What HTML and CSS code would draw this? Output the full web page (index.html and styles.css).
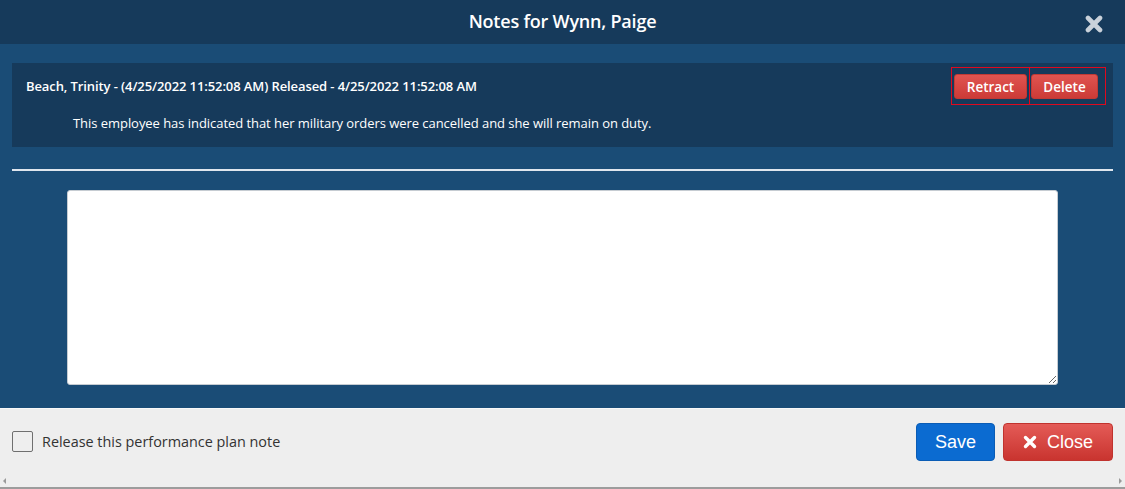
FILE: index.html
```html
<!DOCTYPE html>
<html>
<head>
<meta charset="utf-8">
<link rel="stylesheet" href="styles.css">
</head>
<body>
<div class="dialog">
  <div class="dlg-header">
    <h1 class="dlg-title">Notes for Wynn, Paige</h1>
    <span class="dlg-x">
      <svg width="18" height="18" viewBox="0 0 18 18"><path d="M3 3 L15 15 M15 3 L3 15" stroke="#c9d1da" stroke-width="4.6" stroke-linecap="round"/></svg>
    </span>
  </div>
  <div class="dlg-body">
    <div class="note-card">
      <div class="note-head">
        <div class="note-meta">Beach, Trinity - (4/25/2022 11:52:08 AM) Released - 4/25/2022 11:52:08 AM</div>
        <div class="note-actions">
          <span class="hl hl-left"><button class="btn-sm">Retract</button></span>
          <span class="hl hl-right"><button class="btn-sm">Delete</button></span>
        </div>
      </div>
      <div class="note-text">This employee has indicated that her military orders were cancelled and she will remain on duty.</div>
    </div>
    <hr class="sep">
    <textarea class="note-input"></textarea>
  </div>
  <div class="dlg-footer">
    <label class="chk-label"><span class="chk"></span>Release this performance plan note</label>
    <div class="footer-btns">
      <button class="btn btn-save">Save</button>
      <button class="btn btn-close"><svg width="14" height="14" viewBox="0 0 14 14"><path d="M2.5 2.5 L11.5 11.5 M11.5 2.5 L2.5 11.5" stroke="#fff" stroke-width="3.4" stroke-linecap="round"/></svg>Close</button>
    </div>
    <span class="scroll-l"></span>
    <span class="scroll-r"></span>
  </div>
</div>
</body>
</html>
```
FILE: styles.css
```css
html, body {
  margin: 0;
  padding: 0;
  background: #ffffff;
}
.dialog {
  width: 1125px;
  height: 489px;
  display: flex;
  flex-direction: column;
  font-family: "Open Sans", "DejaVu Sans", sans-serif;
  overflow: hidden;
}
.dlg-header {
  height: 44px;
  flex: none;
  background: #163a5b;
  display: flex;
  align-items: center;
  justify-content: center;
  position: relative;
}
.dlg-title {
  margin: 0 0 2px 0;
  color: #ffffff;
  font-size: 18px;
  font-weight: 600;
  letter-spacing: -0.2px;
}
.dlg-x {
  position: absolute;
  right: 22px;
  top: 15px;
  width: 18px;
  height: 18px;
}
.dlg-body {
  background: #1a4c76;
  height: 364px;
  flex: none;
  padding: 19px 12px 0 12px;
  box-sizing: border-box;
  display: flex;
  flex-direction: column;
}
.note-card {
  background: #163a5b;
  height: 84px;
  box-sizing: border-box;
  padding: 4px 7px 0 14px;
}
.note-head {
  display: flex;
  align-items: center;
  justify-content: space-between;
  height: 38px;
}
.note-meta {
  color: #ffffff;
  font-size: 13px;
  font-weight: 600;
  letter-spacing: -0.1px;
}
.note-actions {
  display: flex;
  height: 38px;
}
.hl {
  display: flex;
  align-items: center;
  border: 1px solid #e0091e;
  box-sizing: border-box;
  height: 38px;
}
.hl-left {
  padding: 0 1px 0 2px;
  width: 79px;
}
.hl-right {
  border-left: none;
  padding: 0 6px 0 1px;
  width: 76px;
}
.btn-sm {
  height: 25px;
  border: 1px solid #c13a35;
  border-radius: 3px;
  background: linear-gradient(#e05450, #cc3b37);
  color: #ffffff;
  font-family: "Open Sans", "DejaVu Sans", sans-serif;
  font-size: 13.5px;
  font-weight: 600;
  padding: 0;
  width: 73px;
  margin-top: 1px;
}
.hl-right .btn-sm {
  width: 67px;
}
.note-text {
  color: #ffffff;
  font-size: 13px;
  line-height: 18px;
  margin-top: 9px;
  padding-left: 47px;
  letter-spacing: -0.05px;
}
.sep {
  margin: 22px 0 0 0;
  border: none;
  height: 2px;
  background: #dfe6ee;
}
.note-input {
  margin: 19px auto 0 auto;
  width: 991px;
  height: 195px;
  box-sizing: border-box;
  border: 1px solid #c6ccd2;
  border-radius: 3px;
  background: #ffffff;
  display: block;
  resize: vertical;
}
.dlg-footer {
  flex: 1;
  background: #eeeeee;
  border-top: 1px solid #f8f8f8;
  border-bottom: 2px solid #9c9c9c;
  display: flex;
  align-items: flex-start;
  justify-content: space-between;
  padding: 14px 12px 0 12px;
  position: relative;
}
.chk-label {
  display: flex;
  align-items: center;
  color: #333333;
  font-size: 14.4px;
  margin-top: 8px;
}
.chk {
  width: 21px;
  height: 21px;
  box-sizing: border-box;
  border: 1px solid #6f6f6f;
  border-radius: 2px;
  margin-right: 9px;
}
.footer-btns {
  display: flex;
  gap: 8px;
}
.btn {
  height: 38px;
  border-radius: 4px;
  color: #ffffff;
  font-family: "Liberation Sans", Arial, sans-serif;
  font-size: 18px;
  display: flex;
  align-items: center;
  justify-content: center;
  padding: 0;
}
.btn-save {
  width: 79px;
  background: #0b6bd1;
  border: 1px solid #0a5cb5;
}
.btn-close {
  width: 110px;
  background: linear-gradient(#e45b57, #c9342f);
  border: 1px solid #c0332e;
  gap: 10px;
}
.scroll-l {
  position: absolute;
  left: 3px;
  bottom: 3px;
  width: 0;
  height: 0;
  border-top: 3px solid transparent;
  border-bottom: 3px solid transparent;
  border-right: 3px solid #9a9a9a;
}
.scroll-r {
  position: absolute;
  right: 3px;
  bottom: 3px;
  width: 0;
  height: 0;
  border-top: 3px solid transparent;
  border-bottom: 3px solid transparent;
  border-left: 3px solid #9a9a9a;
}
```
